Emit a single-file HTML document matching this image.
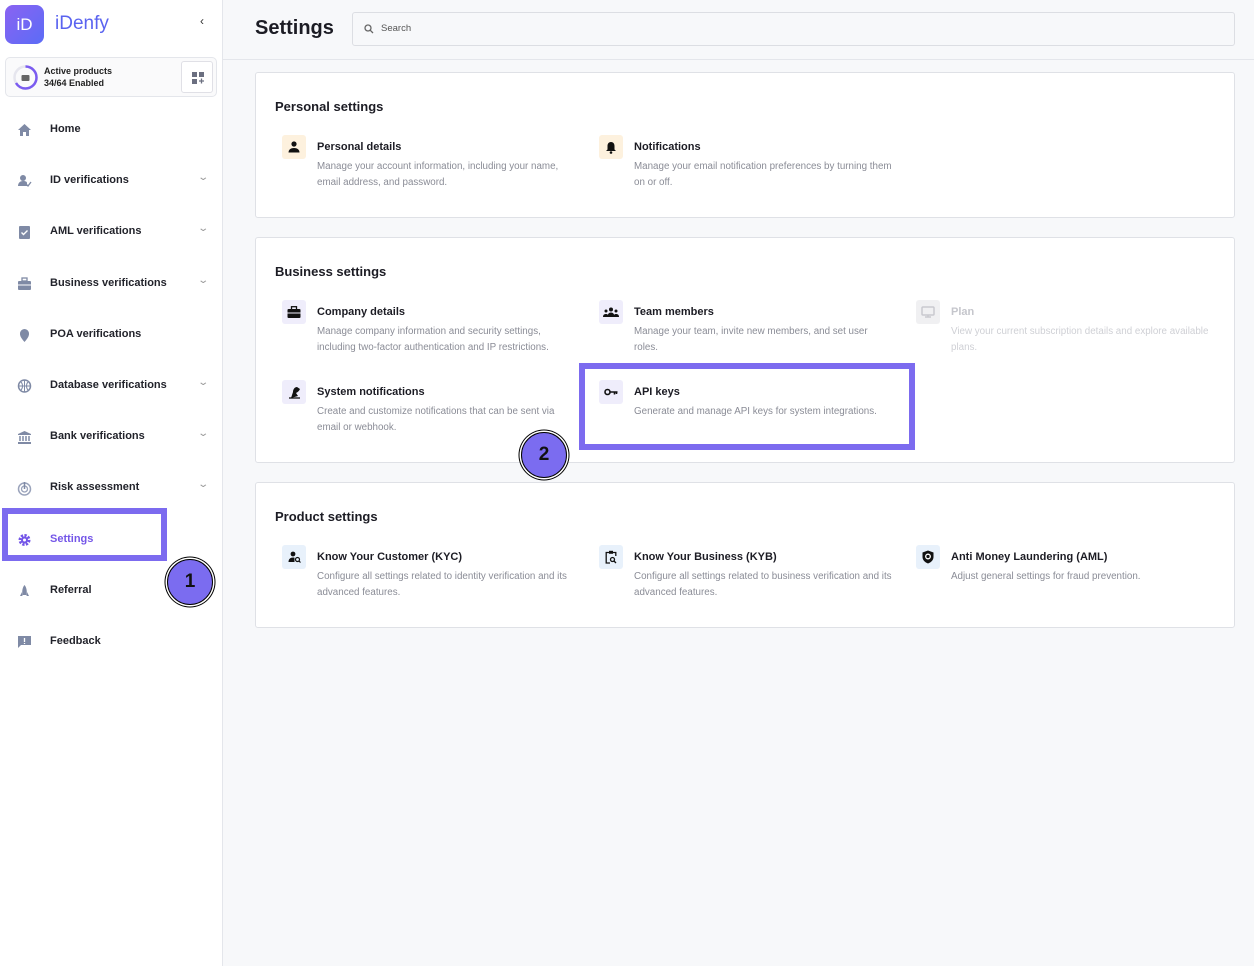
<!DOCTYPE html>
<html><head><meta charset="utf-8"><style>
*{box-sizing:border-box;margin:0;padding:0}
body{width:1254px;height:966px;background:#f7f8fa;font-family:"Liberation Sans",Arial,sans-serif;position:relative;overflow:hidden;color:#1c1c24}
.side{position:absolute;left:0;top:0;width:223px;height:966px;background:#fff;border-right:1px solid #e4e6eb}
.logo{position:absolute;left:5px;top:5px;width:39px;height:39px;border-radius:8px;background:linear-gradient(135deg,#8a63f2,#5b6cf6);color:#fff;font-size:17px;text-align:center;line-height:39px}
.brand{position:absolute;left:55px;top:13px;font-size:19px;color:#5a63f0}
.act{position:absolute;left:5px;top:57px;width:212px;height:40px;border:1px solid #e4e6eb;border-radius:5px;background:#fafafb}
.nav{position:absolute;left:0;width:222px;height:20px;font-size:11px;font-weight:bold;color:#22232b}
.nav .t{position:absolute;left:50px;top:3px}
.nav svg{position:absolute;left:17px;top:3px}
.nav .ch{position:absolute;left:199px;top:1px;color:#999;font-size:10px;font-weight:normal;transform:scaleX(1.4)}
.hdr{position:absolute;left:223px;top:0;right:0;height:60px;border-bottom:1px solid #e4e6eb}
.card{position:absolute;left:255px;width:980px;background:#fff;border:1px solid #dfe1e6;border-radius:3px}
.ct{position:absolute;left:19px;font-size:13px;font-weight:bold;color:#1c1c24}
.it{position:absolute;width:300px}
.ic{position:absolute;left:0;top:0;width:24px;height:24px;border-radius:3px;display:flex;align-items:center;justify-content:center}
.it h4{position:absolute;left:35px;top:6px;font-size:11px;font-weight:bold;color:#1c1c24;white-space:nowrap}
.it p{position:absolute;left:35px;top:24px;width:258px;font-size:9.8px;line-height:16px;color:#8a8c96}
.pe{background:#fdf1de}.bu{background:#efedfb}.pr{background:#e8f1fb}
.hl{position:absolute;border:6px solid #7c6bef}
.num{position:absolute;width:46px;height:46px;border-radius:50%;background:#7b6cf0;border:1.5px solid #000;box-shadow:0 0 0 1.5px #fff,0 0 0 2.5px #000;font-size:19px;font-weight:bold;text-align:center;line-height:43px;color:#111}
</style></head><body>
<div class="side">
<div class="logo">iD</div>
<div class="brand">iDenfy</div>
<div style="position:absolute;left:200px;top:14px;font-size:12px;color:#333">‹</div>
<div class="act">
<svg style="position:absolute;left:6px;top:6px" width="27" height="27"><circle cx="13.5" cy="13.5" r="11" fill="none" stroke="#e6e6ee" stroke-width="2.5"/><path d="M13.5 2.5 A11 11 0 0 1 13.5 24.5 A11 11 0 0 1 4 19" fill="none" stroke="#7b5cf0" stroke-width="2.5"/><rect x="9.5" y="11" width="8" height="6" rx="1" fill="#666"/></svg>
<div style="position:absolute;left:38px;top:7px;font-size:9px;font-weight:bold;color:#222;line-height:12px">Active products<br>34/64 Enabled</div>
<div style="position:absolute;left:175px;top:3px;width:32px;height:32px;border:1px solid #e0e0e6;border-radius:3px;background:#fff"><svg style="position:absolute;left:10px;top:10px" width="12" height="12"><rect x="0" y="0" width="5" height="5" fill="#6b6f80"/><rect x="7" y="0" width="5" height="5" fill="#6b6f80"/><rect x="0" y="7" width="5" height="5" fill="#6b6f80"/><path d="M9.5 6.5v5M7 9h5" stroke="#6b6f80" stroke-width="1.3"/></svg></div>
</div>
<div class="nav" style="top:120px"><svg width="15" height="14"><path d="M1 7L7.5 1L14 7H12V13H9V9H6V13H3V7Z" fill="#7f8aa5"/></svg><span class="t">Home</span></div>
<div class="nav" style="top:171px"><svg width="15" height="14"><circle cx="6" cy="4" r="3" fill="#7f8aa5"/><path d="M1 12c0-3 2-5 5-5s4 1 4 2v3z" fill="#7f8aa5"/><path d="M9 10l2 2 3-4" stroke="#7f8aa5" fill="none" stroke-width="1.3"/></svg><span class="t">ID verifications</span><span class="ch">⌄</span></div>
<div class="nav" style="top:222px"><svg width="15" height="14"><rect x="2" y="1" width="11" height="13" rx="1" fill="#7f8aa5"/><path d="M4.5 7.5l2 2 4-4" stroke="#fff" fill="none" stroke-width="1.4"/></svg><span class="t">AML verifications</span><span class="ch">⌄</span></div>
<div class="nav" style="top:274px"><svg width="15" height="14"><rect x="1" y="4" width="13" height="9" rx="1" fill="#7f8aa5"/><rect x="5" y="1" width="5" height="3" fill="none" stroke="#7f8aa5" stroke-width="1.3"/><path d="M1 8h13" stroke="#fff"/></svg><span class="t">Business verifications</span><span class="ch">⌄</span></div>
<div class="nav" style="top:325px"><svg width="15" height="14"><path d="M7.5 14C3 9 3 7 3 5.5a4.5 4.5 0 0 1 9 0C12 7 12 9 7.5 14z" fill="#7f8aa5"/></svg><span class="t">POA verifications</span></div>
<div class="nav" style="top:376px"><svg width="15" height="14"><circle cx="7.5" cy="7" r="6" fill="none" stroke="#7f8aa5" stroke-width="1.5"/><path d="M1.5 7h12M7.5 1v12M4 3c2 2 2 6 0 8M11 3c-2 2-2 6 0 8" stroke="#7f8aa5" fill="none"/></svg><span class="t">Database verifications</span><span class="ch">⌄</span></div>
<div class="nav" style="top:427px"><svg width="15" height="14"><path d="M1 4L7.5 1L14 4V5H1Z" fill="#7f8aa5"/><path d="M3 6v5M6 6v5M9 6v5M12 6v5" stroke="#7f8aa5" stroke-width="1.5"/><rect x="1" y="12" width="13" height="2" fill="#7f8aa5"/></svg><span class="t">Bank verifications</span><span class="ch">⌄</span></div>
<div class="nav" style="top:478px"><svg width="15" height="15"><circle cx="7.5" cy="8" r="6" fill="none" stroke="#9aa3bb" stroke-width="1.5"/><circle cx="7.5" cy="8" r="3" fill="none" stroke="#9aa3bb" stroke-width="1.3"/><path d="M7.5 1v7" stroke="#7f8aa5" stroke-width="1.5"/></svg><span class="t">Risk assessment</span><span class="ch">⌄</span></div>
<div class="nav" style="top:530px"><svg width="15" height="14"><circle cx="7.5" cy="7" r="4.5" fill="none" stroke="#7456e8" stroke-width="3" stroke-dasharray="2.2 1.3"/><circle cx="7.5" cy="7" r="3.5" fill="#7456e8"/><circle cx="7.5" cy="7" r="1.5" fill="#fff"/></svg><span class="t" style="color:#7456e8">Settings</span></div>
<div class="nav" style="top:581px"><svg width="15" height="14"><path d="M7.5 1C5 4 5 8 5.5 11H9.5C10 8 10 4 7.5 1Z" fill="#7f8aa5"/><path d="M5 8L3 12H5.5M10 8L12 12H9.5" fill="#7f8aa5"/></svg><span class="t">Referral</span></div>
<div class="nav" style="top:632px"><svg width="15" height="14"><path d="M1 1H14V10H4L1 13Z" fill="#7f8aa5"/><path d="M7.5 3v4M7.5 8v1" stroke="#fff" stroke-width="1.3"/></svg><span class="t">Feedback</span></div>
</div>
<div class="hl" style="left:2px;top:508px;width:165px;height:53px"></div>
<div class="num" style="left:167px;top:559px">1</div>

<div class="hdr">
<div style="position:absolute;left:32px;top:17px;font-size:20px;font-weight:bold;color:#1c1c24">Settings</div>
<div style="position:absolute;left:129px;top:12px;width:883px;height:34px;border:1px solid #dcdee3;border-radius:3px;background:#f7f8fa">
<svg style="position:absolute;left:11px;top:11px" width="10" height="10"><circle cx="4" cy="4" r="3" fill="none" stroke="#666" stroke-width="1.3"/><path d="M6.3 6.3L9 9" stroke="#666" stroke-width="1.3"/></svg>
<span style="position:absolute;left:28px;top:10px;font-size:9.5px;color:#555">Search</span></div>
</div>

<div class="card" style="top:72px;height:146px">
<div class="ct" style="top:26px">Personal settings</div>
<div class="it" style="left:26px;top:62px"><div class="ic pe"><svg width="12" height="12"><circle cx="6" cy="3" r="2.6" fill="#111"/><path d="M0.5 11.5c0-3 2.5-4.5 5.5-4.5s5.5 1.5 5.5 4.5z" fill="#111"/></svg></div><h4>Personal details</h4><p>Manage your account information, including your name, email address, and password.</p></div>
<div class="it" style="left:343px;top:62px"><div class="ic pe"><svg width="12" height="13"><path d="M6 1C3.5 1 2.5 3 2.5 5V8.5L1 10H11L9.5 8.5V5C9.5 3 8.5 1 6 1Z" fill="#111"/><circle cx="6" cy="11.5" r="1.3" fill="#111"/></svg></div><h4>Notifications</h4><p>Manage your email notification preferences by turning them on or off.</p></div>
</div>

<div class="card" style="top:237px;height:226px">
<div class="ct" style="top:26px">Business settings</div>
<div class="it" style="left:26px;top:62px"><div class="ic bu"><svg width="14" height="12"><rect x="0.5" y="3" width="13" height="9" rx="1" fill="#111"/><rect x="4.5" y="0.7" width="5" height="3" fill="none" stroke="#111" stroke-width="1.3"/><path d="M0.5 7h13" stroke="#efedfb" stroke-width="1"/></svg></div><h4>Company details</h4><p>Manage company information and security settings, including two-factor authentication and IP restrictions.</p></div>
<div class="it" style="left:343px;top:62px"><div class="ic bu"><svg width="16" height="10"><circle cx="8" cy="2.5" r="2" fill="#111"/><circle cx="3" cy="4" r="1.5" fill="#111"/><circle cx="13" cy="4" r="1.5" fill="#111"/><path d="M4.5 10c0-3 1.5-4.5 3.5-4.5s3.5 1.5 3.5 4.5zM0 10c0-2 1-3 3-3s2 1 2 3zM11 10c0-2 0-3 2-3s3 1 3 3z" fill="#111"/></svg></div><h4>Team members</h4><p>Manage your team, invite new members, and set user roles.</p></div>
<div class="it" style="left:660px;top:62px"><div class="ic" style="background:#f0f0f2"><svg width="14" height="12"><rect x="1" y="1" width="12" height="8" rx="1" fill="none" stroke="#c9c9cf" stroke-width="1.5"/><path d="M4 11h6M7 9v2" stroke="#c9c9cf" stroke-width="1.5"/></svg></div><h4 style="color:#c5c6cc">Plan</h4><p style="color:#cfd0d5">View your current subscription details and explore available plans.</p></div>
<div class="it" style="left:26px;top:142px"><div class="ic bu"><svg width="13" height="13"><path d="M3 12L5 6C5 3 7 1 9 1L12 3C11 5 10 6 8 7L10 10Z" fill="#111"/><path d="M1 12h11" stroke="#111" stroke-width="1.3"/></svg></div><h4>System notifications</h4><p>Create and customize notifications that can be sent via email or webhook.</p></div>
<div class="it" style="left:343px;top:142px"><div class="ic bu"><svg width="14" height="8"><circle cx="3.5" cy="4" r="2.5" fill="none" stroke="#111" stroke-width="1.6"/><path d="M6 4h7.5M10.5 4v2.5M12.5 4v2" stroke="#111" stroke-width="1.6"/></svg></div><h4>API keys</h4><p style="width:280px">Generate and manage API keys for system integrations.</p></div>
</div>

<div class="card" style="top:482px;height:146px">
<div class="ct" style="top:26px">Product settings</div>
<div class="it" style="left:26px;top:62px"><div class="ic pr"><svg width="13" height="12"><circle cx="5" cy="3" r="2.4" fill="#111"/><path d="M0.5 11c0-3 2-4.5 4.5-4.5 1 0 1.5 0.2 1.5 0.2V11z" fill="#111"/><circle cx="9.5" cy="8.5" r="2" fill="none" stroke="#111" stroke-width="1.2"/><path d="M11 10l1.5 1.5" stroke="#111" stroke-width="1.2"/></svg></div><h4>Know Your Customer (KYC)</h4><p>Configure all settings related to identity verification and its advanced features.</p></div>
<div class="it" style="left:343px;top:62px"><div class="ic pr"><svg width="12" height="14"><path d="M4.5 2.5H1.2V13H5M7.5 2.5H10.8V6" fill="none" stroke="#111" stroke-width="1.3"/><rect x="4" y="0.8" width="4" height="3" fill="#111"/><circle cx="7.5" cy="9.5" r="2" fill="none" stroke="#111" stroke-width="1.3"/><path d="M9 11l2 2" stroke="#111" stroke-width="1.3"/></svg></div><h4>Know Your Business (KYB)</h4><p>Configure all settings related to business verification and its advanced features.</p></div>
<div class="it" style="left:660px;top:62px"><div class="ic pr"><svg width="12" height="14"><path d="M6 0.5L11.5 2.5V7C11.5 10 9 12.5 6 13.5C3 12.5 0.5 10 0.5 7V2.5Z" fill="#111"/><circle cx="6" cy="6.5" r="2.3" fill="none" stroke="#fff" stroke-width="1.3"/></svg></div><h4>Anti Money Laundering (AML)</h4><p>Adjust general settings for fraud prevention.</p></div>
</div>

<div class="hl" style="left:579px;top:363px;width:336px;height:87px"></div>
<div class="num" style="left:521px;top:432px">2</div>
</body></html>
